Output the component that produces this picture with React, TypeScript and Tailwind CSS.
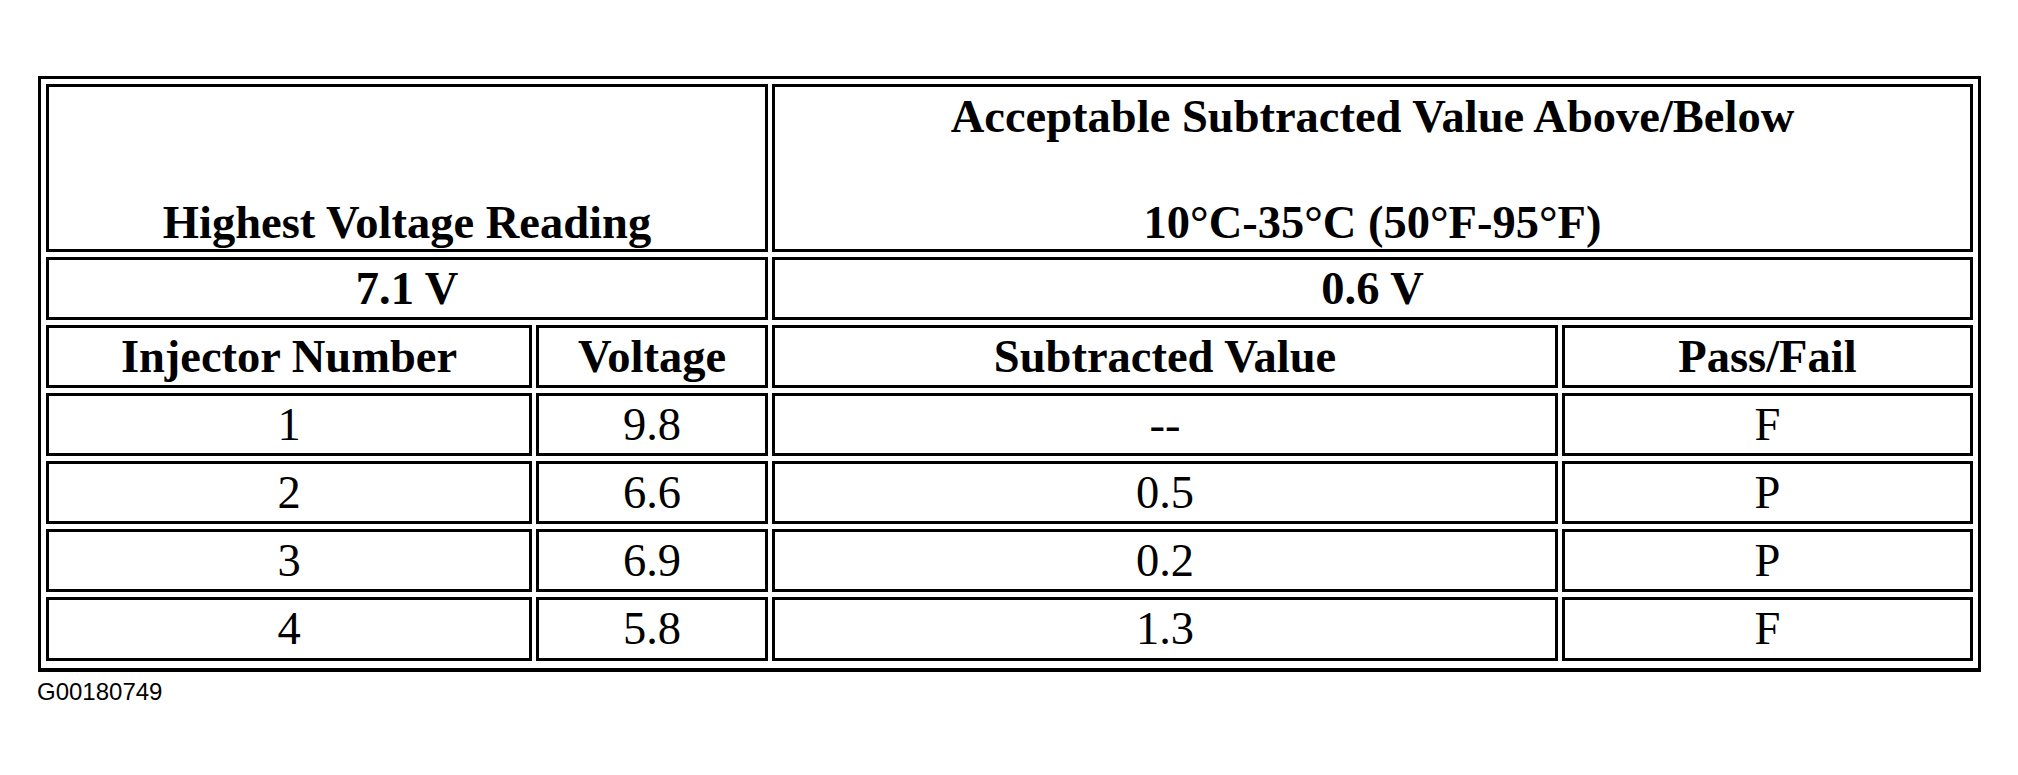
const rows = [
  { n: '1', v: '9.8', s: '--', p: 'F' },
  { n: '2', v: '6.6', s: '0.5', p: 'P' },
  { n: '3', v: '6.9', s: '0.2', p: 'P' },
  { n: '4', v: '5.8', s: '1.3', p: 'F' },
]

const cell = 'border-[3px] border-black flex items-center justify-center'

const App = () => {
  return (
    <div className="min-h-screen bg-white text-black">
      <div className="pt-[76px] pl-[38px]">
        <div className="w-fit border-[3px] border-b-[4px] border-black p-[5px] pb-[7px] font-['Liberation_Serif','Times_New_Roman',serif] text-[46.5px] leading-[52px]">
          <div className="grid grid-cols-[486px_232px_786px_411px] grid-rows-[168px_repeat(5,63px)_64px] gap-x-[4px] gap-y-[5px]">
            {/* header */}
            <div className="col-span-2 border-[3px] border-black flex items-end justify-center font-bold">
              Highest Voltage Reading
            </div>
            <div className="col-span-2 border-[3px] border-black flex flex-col items-center justify-between pt-1 font-bold">
              <span>Acceptable Subtracted Value Above/Below</span>
              <span>10°C-35°C (50°F-95°F)</span>
            </div>

            <div className={`col-span-2 font-bold ${cell}`}>7.1 V</div>
            <div className={`col-span-2 font-bold ${cell}`}>0.6 V</div>

            <div className={`font-bold ${cell}`}>Injector Number</div>
            <div className={`font-bold ${cell}`}>Voltage</div>
            <div className={`font-bold ${cell}`}>Subtracted Value</div>
            <div className={`font-bold ${cell}`}>Pass/Fail</div>

            {rows.map((r) => (
              <div key={r.n} className="contents">
                <div className={cell}>{r.n}</div>
                <div className={cell}>{r.v}</div>
                <div className={cell}>{r.s}</div>
                <div className={cell}>{r.p}</div>
              </div>
            ))}
          </div>
        </div>
      </div>
      <div className="pl-[37px] mt-[6px] font-['Liberation_Sans',Arial,sans-serif] text-[24px] leading-[28px]">
        G00180749
      </div>
    </div>
  )
}

export default App
